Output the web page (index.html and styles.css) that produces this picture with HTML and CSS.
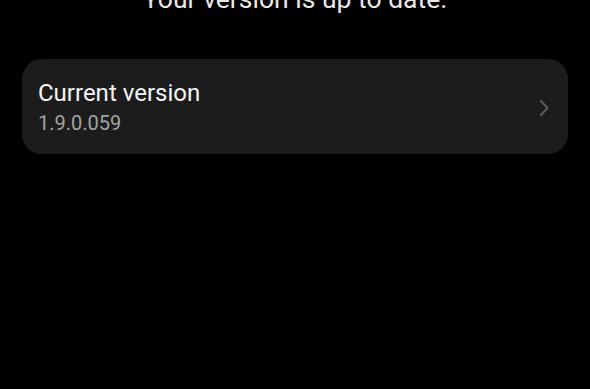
FILE: index.html
```html
<!DOCTYPE html>
<html lang="en">
<head>
  <meta charset="UTF-8">
  <meta name="viewport" content="width=device-width, initial-scale=1.0">
  <title>Software update</title>
  <link rel="stylesheet" href="styles.css">
</head>
<body>
  <main class="page">
    <p class="status">Your version is up to date.</p>

    <a class="card" href="#">
      <div class="card-text">
        <span class="card-title">Current version</span>
        <span class="card-sub">1.9.0.059</span>
      </div>
      <svg class="chevron" width="12" height="18" viewBox="0 0 12 18">
        <path d="M3 2 L9.5 9 L3 16" fill="none" stroke="#5c5c5c" stroke-width="2" stroke-linecap="round" stroke-linejoin="round"/>
      </svg>
    </a>
  </main>
</body>
</html>
```

FILE: styles.css
```css
* {
  margin: 0;
  padding: 0;
  box-sizing: border-box;
}

html, body {
  height: 100%;
  overflow: hidden;
}

body {
  background: #000;
  color: #f2f2f2;
  font-family: Roboto, 'Noto Sans', sans-serif;
}

.page {
  padding: 0 22px;
}

/* status line, scrolled partly out of view */
.status {
  margin-top: -15px;
  text-align: center;
  font-size: 26.5px;
  line-height: 28px;
  color: #e8e8e8;
}

.card {
  display: flex;
  align-items: center;
  justify-content: space-between;
  margin-top: 46px;
  height: 95px;
  padding: 2px 18px 0 16px;
  background: #1c1c1c;
  border-radius: 20px;
  text-decoration: none;
}

.card-text {
  display: flex;
  flex-direction: column;
  gap: 3px;
}

.card-title {
  font-size: 24px;
  line-height: 28px;
  color: #f4f4f4;
}

.card-sub {
  font-size: 20px;
  line-height: 26px;
  color: #a3a3a3;
}

.chevron {
  margin-top: 0;
}
```
